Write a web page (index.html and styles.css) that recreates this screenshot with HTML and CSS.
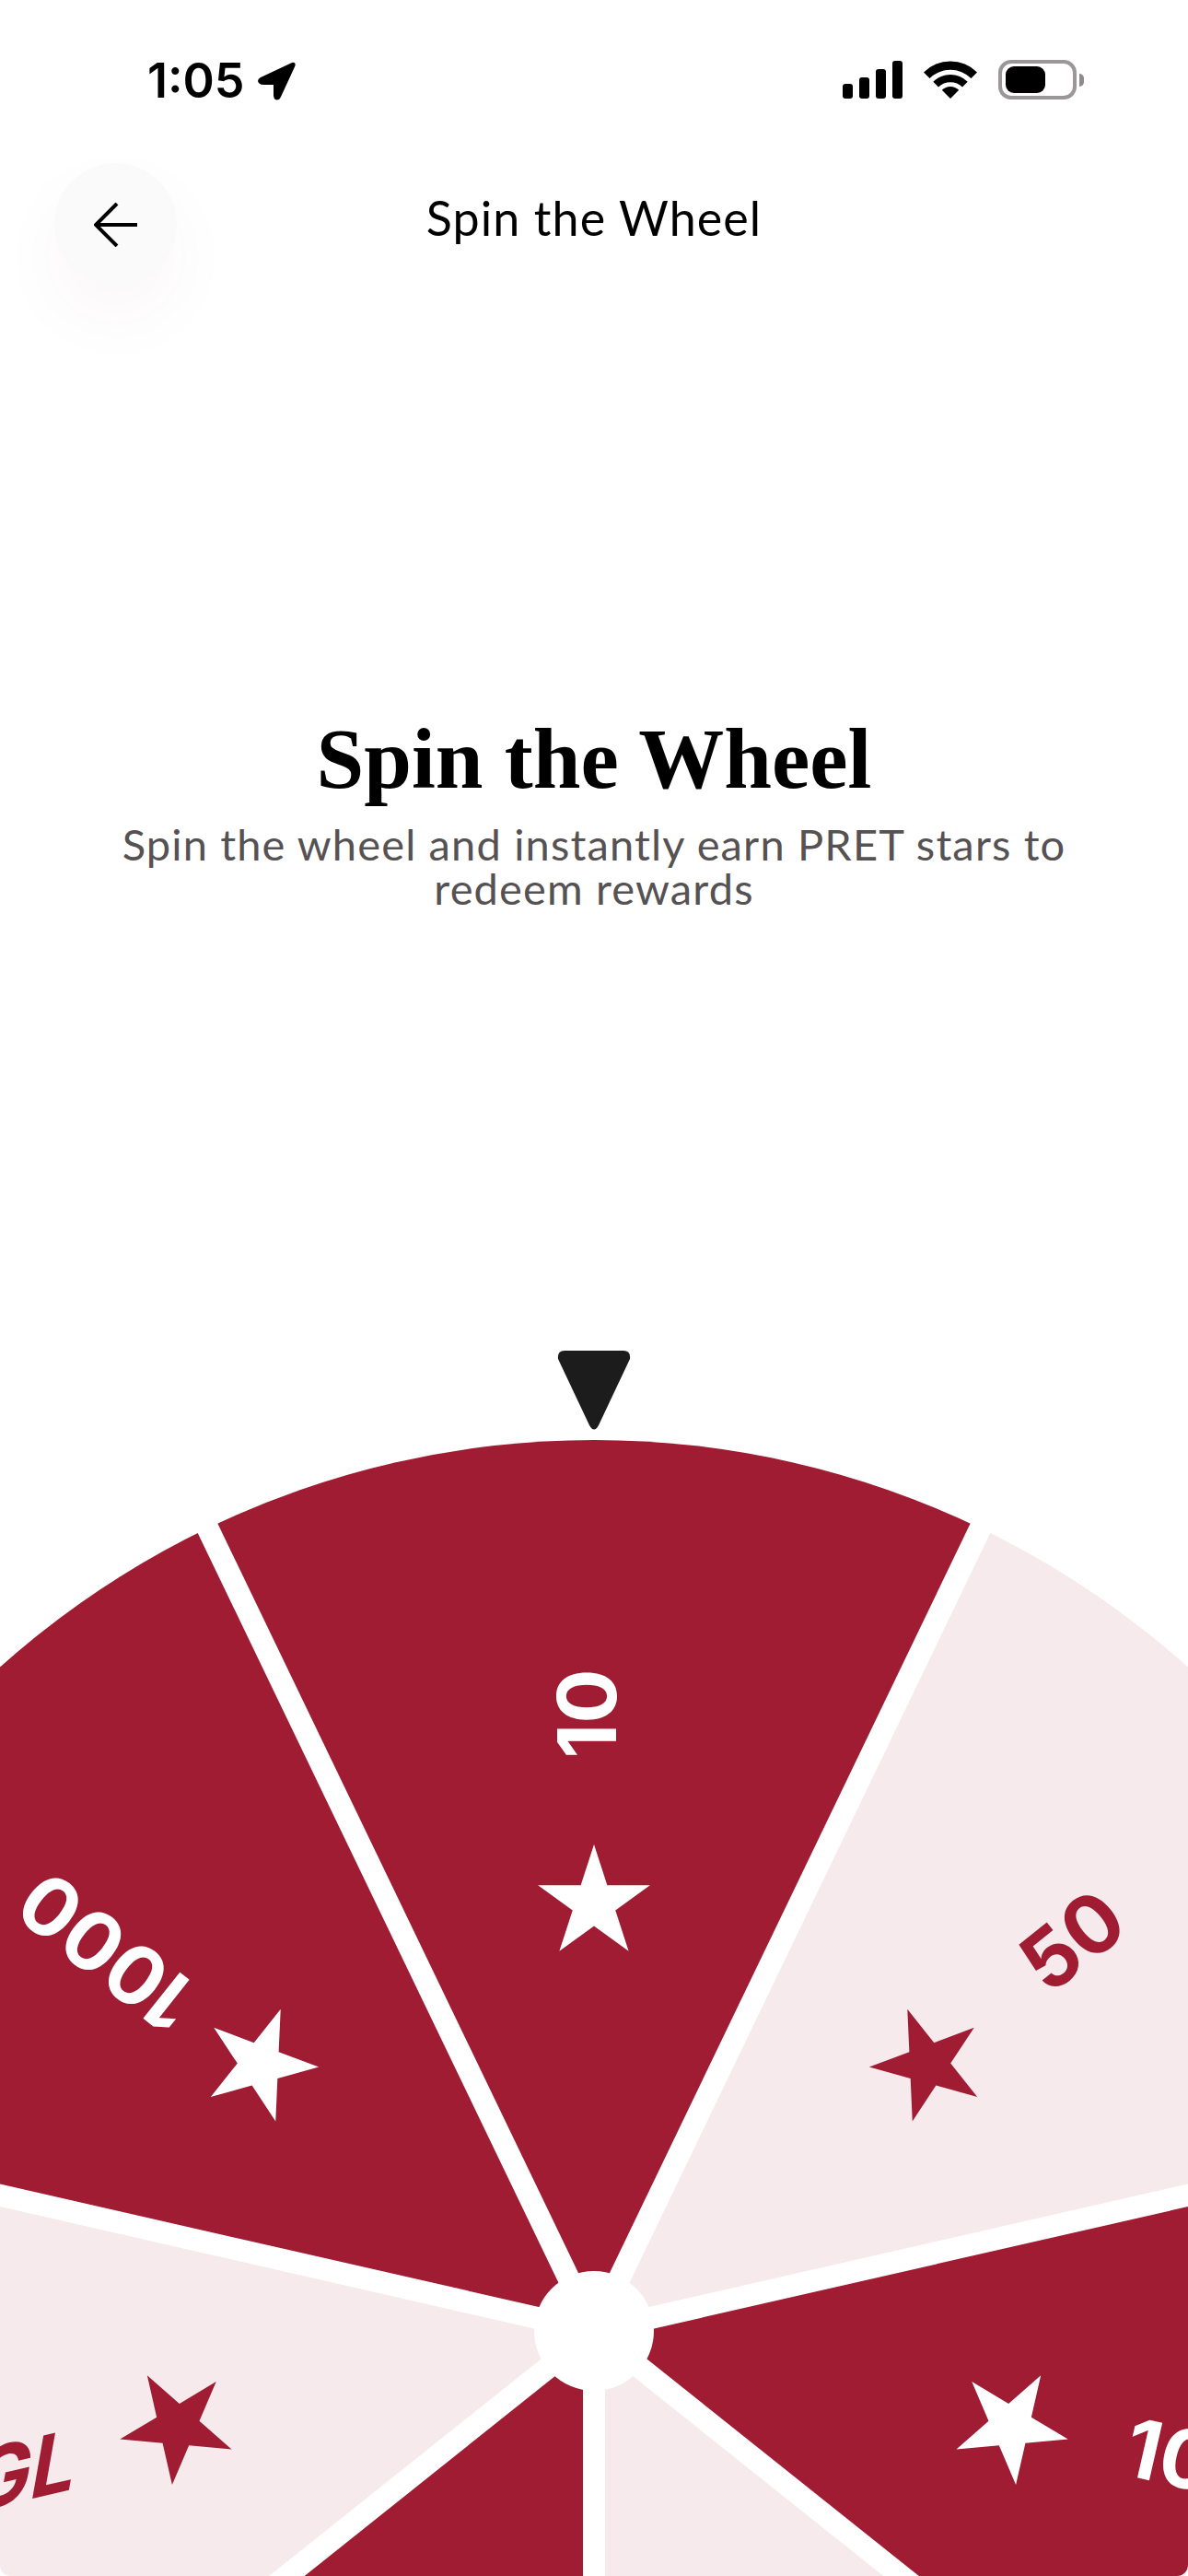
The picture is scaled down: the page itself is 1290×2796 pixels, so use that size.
FILE: index.html
```html
<!DOCTYPE html>
<html lang="en">
<head>
  <meta charset="UTF-8">
  <title>Spin the Wheel</title>
  <link rel="stylesheet" href="styles.css">
</head>
<body>
  <div class="screen">
    <!-- Status bar -->
    <div class="status-bar">
      <div class="status-left">
        <span class="time">1:05</span>
        <svg class="location" width="42" height="42" viewBox="0 0 42 42">
          <path d="M37 1.500 L4 17 Q-1 20 2.500 23.500 Q4 25 8 25 L18 25 L18 36 Q18 41 21.500 41.500 Q24.500 41.500 26 38 L41 5.500 Q42.500 2 40.500 1 Q39 0.500 37 1.500 Z"/>
        </svg>
      </div>
      <div class="status-right">
        <div class="signal">
          <span class="bar bar-1"></span>
          <span class="bar bar-2"></span>
          <span class="bar bar-3"></span>
          <span class="bar bar-4"></span>
        </div>
        <svg class="wifi" width="58" height="43" viewBox="0 0 58 43">
          <path d="M29 42 L19.800 32.800 A13 13 0 0 1 38.200 32.800 Z"/>
          <path d="M16 29.500 L10.300 23.800 A26.500 26.500 0 0 1 47.700 23.800 L42 29.500 A18.500 18.500 0 0 0 16 29.500 Z"/>
          <path d="M6.500 20 L0 13.500 A41 41 0 0 1 58 13.500 L51.500 20 A32 32 0 0 0 6.500 20 Z"/>
        </svg>
        <div class="battery">
          <div class="battery-body"><div class="battery-level"></div></div>
          <div class="battery-nub"></div>
        </div>
      </div>
    </div>

    <!-- Top navigation -->
    <div class="nav">
      <button class="back">
        <svg width="48" height="48" viewBox="0 0 48 48">
          <path d="M47 24 H3 M25 1 L2 24 L25 47" fill="none" stroke="#000" stroke-width="4"/>
        </svg>
      </button>
      <div class="nav-title">Spin the Wheel</div>
    </div>

    <!-- Heading -->
    <div class="hero">
      <h1>Spin the Wheel</h1>
      <p>Spin the wheel and instantly earn PRET stars to redeem rewards</p>
    </div>

    <!-- Wheel, 7 segments, one every 51.43deg -->
    <svg class="wheel" width="1290" height="1356" viewBox="0 1440 1290 1356">
      <defs>
        <path id="sector" d="M0 0 L-419.500 -871.300 A967 967 0 0 1 419.500 -871.300 Z"/>
        <polygon id="star" points="0,-528 14.370,-483.780 60.870,-483.780 23.250,-456.450 37.620,-412.220 0,-439.550 -37.620,-412.220 -23.250,-456.450 -60.870,-483.780 -14.370,-483.780"/>
      </defs>

      <path class="pointer" d="M613 1466 H677 Q685 1466 684 1475 L650 1547 Q645 1556 640 1547 L606 1475 Q605 1466 613 1466 Z"/>

      <g transform="translate(645 2530)">
        <use class="dark" href="#sector"/>
        <use class="light" href="#sector" transform="rotate(51.430)"/>
        <use class="dark" href="#sector" transform="rotate(102.860)"/>
        <use class="light" href="#sector" transform="rotate(154.290)"/>
        <use class="dark" href="#sector" transform="rotate(205.710)"/>
        <use class="light" href="#sector" transform="rotate(257.140)"/>
        <use class="dark" href="#sector" transform="rotate(308.570)"/>

        <!-- Separators -->
        <g class="gaps">
          <line y2="-1000" transform="rotate(25.710)"/>
          <line y2="-1000" transform="rotate(77.140)"/>
          <line y2="-1000" transform="rotate(128.570)"/>
          <line y2="-1000" transform="rotate(180)"/>
          <line y2="-1000" transform="rotate(231.430)"/>
          <line y2="-1000" transform="rotate(282.860)"/>
          <line y2="-1000" transform="rotate(334.290)"/>
        </g>

        <!-- Labels -->
        <g class="on-dark">
          <use href="#star"/>
          <text class="prize" transform="translate(24 -670) rotate(-90)">10</text>
        </g>
        <g class="on-light" transform="rotate(51.430)">
          <use href="#star"/>
          <text class="prize" transform="translate(24 -670) rotate(-90)">50</text>
        </g>
        <g class="on-dark" transform="rotate(102.860)">
          <use href="#star"/>
          <text class="prize" transform="translate(24 -670) rotate(-90)">100</text>
        </g>
        <g class="on-light" transform="rotate(257.140)">
          <use href="#star"/>
        </g>
        <g class="on-dark" transform="rotate(308.570)">
          <use href="#star"/>
          <text class="prize" transform="translate(24 -670) rotate(-90)">1000</text>
        </g>
        <circle class="hub" r="65"/>
      </g>

      <text class="prize prize-end on-light" transform="translate(78 2702) rotate(-13) skewX(-23)">GL</text>
    </svg>
  </div>
</body>
</html>
```
FILE: styles.css
```css
* {
  box-sizing: border-box;
}

body {
  margin: 0;
  background: #fff;
}

.screen {
  width: 1290px;
  height: 2796px;
  display: flex;
  flex-direction: column;
  overflow: hidden;
  background: #fff;
  border-radius: 12px;
}

/* Status bar */
.status-bar {
  height: 150px;
  padding: 66px 113px 0 160px;
  display: flex;
  justify-content: space-between;
  align-items: flex-start;
}

.status-left {
  display: flex;
  align-items: center;
  gap: 13px;
}

.time {
  font-family: Inter, sans-serif;
  font-weight: 600;
  font-size: 52px;
  line-height: 44px;
  color: #000;
}

.location {
  display: block;
}

.status-right {
  display: flex;
  align-items: flex-end;
  gap: 23px;
  height: 43px;
  margin-top: -1px;
}

.signal {
  display: flex;
  align-items: flex-end;
  gap: 7px;
  padding-bottom: 1px;
}

.bar {
  width: 11px;
  background: #000;
  border-radius: 3px;
}

.bar-1 { height: 16px; }
.bar-2 { height: 23px; }
.bar-3 { height: 32px; }
.bar-4 { height: 41px; }

.wifi {
  display: block;
}

.battery {
  display: flex;
  align-items: center;
  gap: 3px;
}

.battery-body {
  width: 85px;
  height: 43px;
  border: 4px solid #9b9698;
  border-radius: 14px;
  padding: 3px 4px;
}

.battery-level {
  width: 43px;
  height: 29px;
  background: #000;
  border-radius: 9px;
}

.battery-nub {
  width: 5px;
  height: 14px;
  background: #8f8b8d;
  border-radius: 0 7px 7px 0;
}

/* Navigation: back button left, title centered on the page */
.nav {
  height: 186px;
  padding: 27px 59px 0;
  display: grid;
  grid-template-columns: 1fr auto 1fr;
  align-items: start;
}

.back {
  display: flex;
  align-items: center;
  justify-content: center;
  width: 133px;
  height: 133px;
  padding: 0;
  border: none;
  border-radius: 50%;
  background: #fafafa;
  box-shadow: 0 34px 80px rgba(160, 28, 50, 0.04);
}

.nav-title {
  margin-top: 27px;
  font-family: Lato, sans-serif;
  font-size: 52px;
  letter-spacing: 1.100px;
  line-height: 64px;
  color: #000;
}

/* Heading */
.hero {
  padding-top: 438px;
  text-align: center;
}

.hero h1 {
  margin: 0;
  font-family: "Liberation Serif", serif;
  font-weight: 700;
  font-size: 93px;
  line-height: 100px;
  color: #000;
}

.hero p {
  margin: 18px auto 0;
  width: 1060px;
  font-family: Lato, sans-serif;
  font-size: 47px;
  letter-spacing: 1.150px;
  line-height: 48px;
  color: #565153;
}

/* Wheel */
.wheel {
  display: block;
  margin-top: auto;
  flex: none;
}

.pointer {
  fill: #1c1c1c;
}

.dark {
  fill: #9f1c33;
}

.light {
  fill: #f6eaec;
}

.gaps line {
  stroke: #fff;
  stroke-width: 24;
}

.hub {
  fill: #fff;
}

.on-dark {
  fill: #fff;
}

.on-light {
  fill: #9f1c33;
}

.prize {
  font-family: Inter, sans-serif;
  font-weight: 700;
  font-size: 88px;
  text-anchor: middle;
}

.prize-end {
  text-anchor: end;
}
```
